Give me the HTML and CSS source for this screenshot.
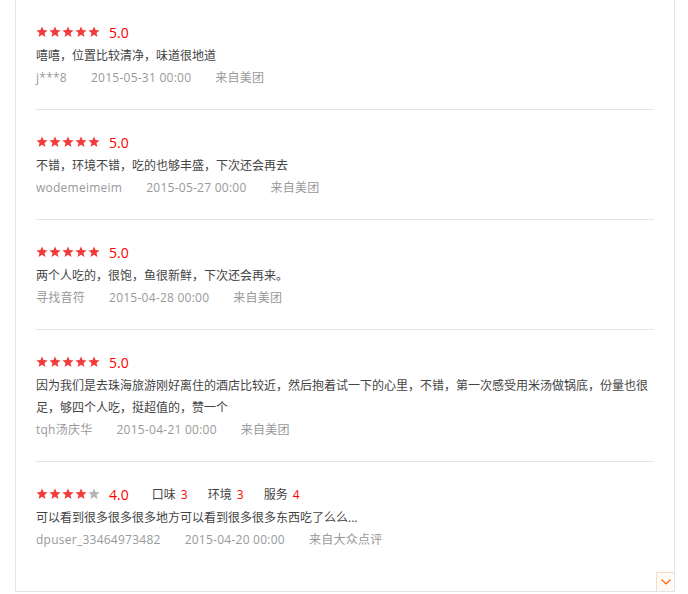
FILE: index.html
```html
<!DOCTYPE html>
<html lang="zh-CN">
<head>
  <meta charset="UTF-8">
  <title>评价列表</title>
  <link rel="stylesheet" href="styles.css">
</head>
<body>
  <svg width="0" height="0" class="defs">
    <defs>
      <path id="star" d="M6 0.4 L7.55 4.1 L11.6 4.4 L8.5 7 L9.45 11 L6 8.85 L2.55 11 L3.5 7 L0.4 4.4 L4.45 4.1 Z"/>
    </defs>
  </svg>

  <div class="review-box">
    <ul class="review-list">
      <li class="review">
        <div class="rate-row">
          <span class="stars">
            <svg viewBox="0 0 12 12"><use href="#star"/></svg><svg viewBox="0 0 12 12"><use href="#star"/></svg><svg viewBox="0 0 12 12"><use href="#star"/></svg><svg viewBox="0 0 12 12"><use href="#star"/></svg><svg viewBox="0 0 12 12"><use href="#star"/></svg>
          </span>
          <span class="score">5.0</span>
        </div>
        <p class="content">嘻嘻，位置比较清净，味道很地道</p>
        <div class="meta">
          <span>j***8</span>
          <span>2015-05-31 00:00</span>
          <span>来自美团</span>
        </div>
      </li>

      <li class="review">
        <div class="rate-row">
          <span class="stars">
            <svg viewBox="0 0 12 12"><use href="#star"/></svg><svg viewBox="0 0 12 12"><use href="#star"/></svg><svg viewBox="0 0 12 12"><use href="#star"/></svg><svg viewBox="0 0 12 12"><use href="#star"/></svg><svg viewBox="0 0 12 12"><use href="#star"/></svg>
          </span>
          <span class="score">5.0</span>
        </div>
        <p class="content">不错，环境不错，吃的也够丰盛，下次还会再去</p>
        <div class="meta">
          <span>wodemeimeim</span>
          <span>2015-05-27 00:00</span>
          <span>来自美团</span>
        </div>
      </li>

      <li class="review">
        <div class="rate-row">
          <span class="stars">
            <svg viewBox="0 0 12 12"><use href="#star"/></svg><svg viewBox="0 0 12 12"><use href="#star"/></svg><svg viewBox="0 0 12 12"><use href="#star"/></svg><svg viewBox="0 0 12 12"><use href="#star"/></svg><svg viewBox="0 0 12 12"><use href="#star"/></svg>
          </span>
          <span class="score">5.0</span>
        </div>
        <p class="content">两个人吃的，很饱，鱼很新鲜，下次还会再来。</p>
        <div class="meta">
          <span>寻找音符</span>
          <span>2015-04-28 00:00</span>
          <span>来自美团</span>
        </div>
      </li>

      <li class="review">
        <div class="rate-row">
          <span class="stars">
            <svg viewBox="0 0 12 12"><use href="#star"/></svg><svg viewBox="0 0 12 12"><use href="#star"/></svg><svg viewBox="0 0 12 12"><use href="#star"/></svg><svg viewBox="0 0 12 12"><use href="#star"/></svg><svg viewBox="0 0 12 12"><use href="#star"/></svg>
          </span>
          <span class="score">5.0</span>
        </div>
        <p class="content">因为我们是去珠海旅游刚好离住的酒店比较近，然后抱着试一下的心里，不错，第一次感受用米汤做锅底，份量也很足，够四个人吃，挺超值的，赞一个</p>
        <div class="meta">
          <span>tqh汤庆华</span>
          <span>2015-04-21 00:00</span>
          <span>来自美团</span>
        </div>
      </li>

      <li class="review">
        <div class="rate-row">
          <span class="stars">
            <svg viewBox="0 0 12 12"><use href="#star"/></svg><svg viewBox="0 0 12 12"><use href="#star"/></svg><svg viewBox="0 0 12 12"><use href="#star"/></svg><svg viewBox="0 0 12 12"><use href="#star"/></svg><svg viewBox="0 0 12 12" class="off"><use href="#star"/></svg>
          </span>
          <span class="score">4.0</span>
          <span class="sub-scores">
            <span>口味 <em>3</em></span>
            <span>环境 <em>3</em></span>
            <span>服务 <em>4</em></span>
          </span>
        </div>
        <p class="content">可以看到很多很多很多地方可以看到很多很多东西吃了么么...</p>
        <div class="meta">
          <span>dpuser_33464973482</span>
          <span>2015-04-20 00:00</span>
          <span>来自大众点评</span>
        </div>
      </li>
    </ul>

    <!-- 展开更多 -->
    <a class="more-btn" href="#">
      <svg viewBox="0 0 10 6" width="10" height="6"><path d="M0.5 0.5 L5 5 L9.5 0.5" fill="none" stroke="#f60" stroke-width="1.2"/></svg>
    </a>
  </div>
</body>
</html>
```

FILE: styles.css
```css
body {
  margin: 0;
  padding: 0;
  background: #fff;
  font-family: "Open Sans", "Noto Sans CJK SC", sans-serif;
  font-size: 12px;
  color: #444;
}

.defs {
  position: absolute;
}

.review-box {
  position: relative;
  width: 618px;
  margin-left: 15px;
  padding: 0 20px 20px;
  border: 1px solid #e5e5e5;
  border-top: none;
}

.review-list {
  list-style: none;
  margin: 0;
  padding: 0;
}

.review {
  padding: 22px 0 20px;
  border-bottom: 1px solid #e5e5e5;
}

.review:last-child {
  border-bottom: none;
}

.rate-row {
  display: flex;
  align-items: center;
  height: 20px;
}

.stars {
  display: flex;
  gap: 1px;
}

.stars svg {
  width: 12px;
  height: 12px;
  fill: #f23b3b;
}

.stars svg.off {
  fill: #b5b5b5;
}

.score {
  margin-left: 9px;
  font-size: 14px;
  color: #f00;
}

.sub-scores {
  display: flex;
  gap: 20px;
  margin-left: 23px;
  color: #444;
  font-size: 12px;
}

.sub-scores em {
  font-style: normal;
  margin-left: 2px;
  color: #f00;
}

.content {
  margin: 3px 0 0;
  line-height: 22px;
}

.meta {
  display: flex;
  gap: 24px;
  line-height: 22px;
  color: #999;
  letter-spacing: 0.25px;
}

.more-btn {
  position: absolute;
  right: 0;
  bottom: 0;
  width: 17px;
  height: 18px;
  border: 1px solid #fadcc4;
  border-right: none;
  border-bottom: none;
  background: #fffaf6;
  display: flex;
  align-items: center;
  justify-content: center;
}
```
